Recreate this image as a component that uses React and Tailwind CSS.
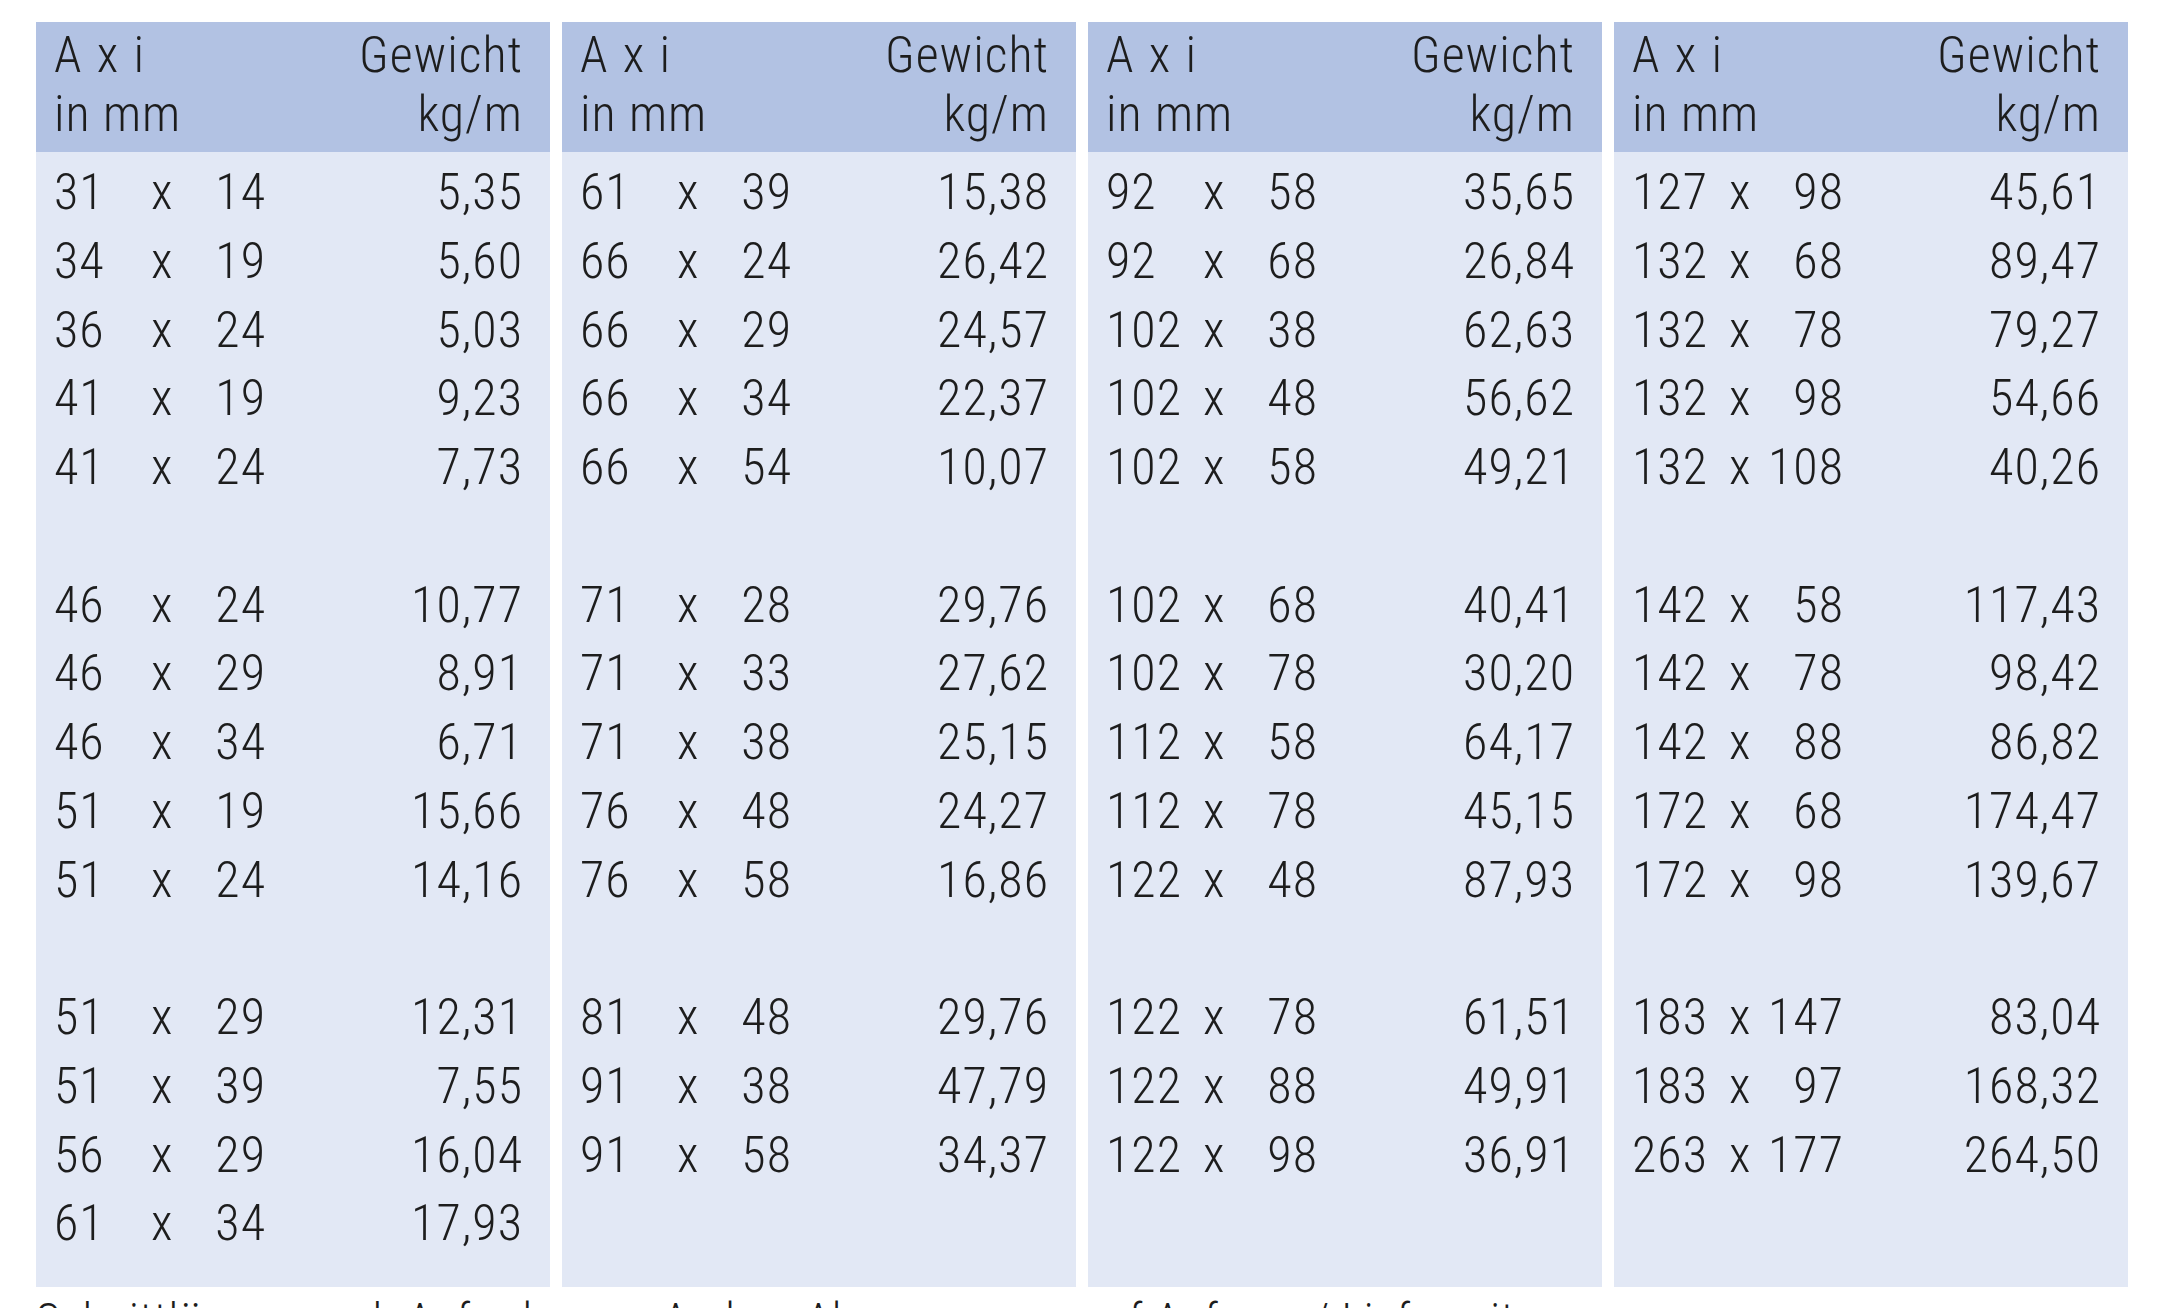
import React from 'react';

const columns = [
  [
    ['31', '14', '5,35'],
    ['34', '19', '5,60'],
    ['36', '24', '5,03'],
    ['41', '19', '9,23'],
    ['41', '24', '7,73'],
    null,
    ['46', '24', '10,77'],
    ['46', '29', '8,91'],
    ['46', '34', '6,71'],
    ['51', '19', '15,66'],
    ['51', '24', '14,16'],
    null,
    ['51', '29', '12,31'],
    ['51', '39', '7,55'],
    ['56', '29', '16,04'],
    ['61', '34', '17,93'],
  ],
  [
    ['61', '39', '15,38'],
    ['66', '24', '26,42'],
    ['66', '29', '24,57'],
    ['66', '34', '22,37'],
    ['66', '54', '10,07'],
    null,
    ['71', '28', '29,76'],
    ['71', '33', '27,62'],
    ['71', '38', '25,15'],
    ['76', '48', '24,27'],
    ['76', '58', '16,86'],
    null,
    ['81', '48', '29,76'],
    ['91', '38', '47,79'],
    ['91', '58', '34,37'],
  ],
  [
    ['92', '58', '35,65'],
    ['92', '68', '26,84'],
    ['102', '38', '62,63'],
    ['102', '48', '56,62'],
    ['102', '58', '49,21'],
    null,
    ['102', '68', '40,41'],
    ['102', '78', '30,20'],
    ['112', '58', '64,17'],
    ['112', '78', '45,15'],
    ['122', '48', '87,93'],
    null,
    ['122', '78', '61,51'],
    ['122', '88', '49,91'],
    ['122', '98', '36,91'],
  ],
  [
    ['127', '98', '45,61'],
    ['132', '68', '89,47'],
    ['132', '78', '79,27'],
    ['132', '98', '54,66'],
    ['132', '108', '40,26'],
    null,
    ['142', '58', '117,43'],
    ['142', '78', '98,42'],
    ['142', '88', '86,82'],
    ['172', '68', '174,47'],
    ['172', '98', '139,67'],
    null,
    ['183', '147', '83,04'],
    ['183', '97', '168,32'],
    ['263', '177', '264,50'],
  ],
];

const Row = ({ row }) => {
  if (!row) return <div className="h-[68.75px]" />;
  const [a, i, kg] = row;
  return (
    <div className="flex h-[68.75px] items-center leading-[68.75px]">
      <span className="w-[97px]">{a}</span>
      <span className="w-[20px] text-center">x</span>
      <span className="w-[95px] text-right">{i}</span>
      <span className="flex-1 text-right">{kg}</span>
    </div>
  );
};

const Column = ({ rows }) => (
  <div className="flex w-[514px] flex-col">
    <div className="flex h-[130px] justify-between bg-[#b2c2e3] pl-[18px] pr-[27px] pt-[4px] leading-[59px]">
      <div>
        <div className="tracking-[2px]">A x i</div>
        <div>in mm</div>
      </div>
      <div className="text-right">
        <div>Gewicht</div>
        <div>kg/m</div>
      </div>
    </div>
    <div className="h-[1135px] bg-[#e2e8f5] pl-[18px] pr-[27px] pt-[6px]">
      {rows.map((row, idx) => (
        <Row key={idx} row={row} />
      ))}
    </div>
  </div>
);

export default function App() {
  return (
    <div
      className="min-h-screen bg-white pl-[36px] pt-[22px] text-[50px] font-light tracking-[1px] text-[#1d1d1d]"
      style={{ fontFamily: '"Roboto Condensed", "Open Sans", sans-serif' }}
    >
      <div className="flex gap-[12px]">
        {columns.map((rows, idx) => (
          <Column key={idx} rows={rows} />
        ))}
      </div>
      <p className="mt-[5px] text-[46px] leading-[56px]">
        Schnittlängen nach Anforderung. Andere Abmessungen auf Anfrage / Lieferzeit
      </p>
    </div>
  );
}
